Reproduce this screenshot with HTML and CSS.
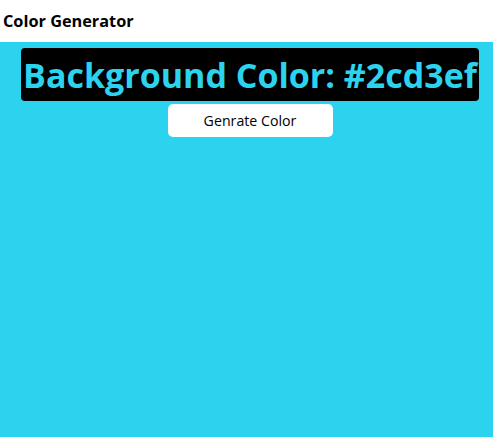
FILE: index.html
```html
<!DOCTYPE html>
<html>
<head>
<meta charset="utf-8">
<link rel="stylesheet" href="styles.css">
</head>
<body>
<header class="topbar">Color Generator</header>
<main class="content">
  <h1 class="title">Background Color: #2cd3ef</h1>
  <button class="gen-btn">Genrate Color</button>
</main>
</body>
</html>
```
FILE: styles.css
```css
html, body {
  margin: 0;
  padding: 0;
}
body {
  background: #2cd3ef;
  min-height: 437px;
  font-family: "Open Sans", "Noto Sans", sans-serif;
}
.topbar {
  background: #fff;
  height: 42px;
  display: flex;
  align-items: center;
  padding-left: 3px;
  font-weight: 700;
  font-size: 16.3px;
  color: #000;
}
.content {
  display: flex;
  flex-direction: column;
  align-items: center;
  padding-left: 7px;
}
.title {
  margin: 6px 0 0;
  background: #000;
  color: #2cd3ef;
  border-radius: 4px;
  width: 458px;
  box-sizing: border-box;
  height: 53px;
  display: flex;
  align-items: center;
  justify-content: center;
  font-size: 34px;
  font-weight: 700;
  white-space: nowrap;
}
.gen-btn {
  margin-top: 3px;
  width: 165px;
  height: 33px;
  background: #fff;
  border: none;
  border-radius: 5px;
  font-family: inherit;
  font-size: 14.2px;
  color: #000;
  cursor: pointer;
}
```
